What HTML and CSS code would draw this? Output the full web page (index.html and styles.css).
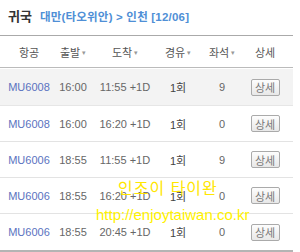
FILE: index.html
```html
<!DOCTYPE html>
<html lang="ko">
<head>
<meta charset="utf-8">
<link rel="stylesheet" href="styles.css">
</head>
<body>
<div class="page">
  <div class="title">
    <span class="title-main">귀국</span>
    <span class="title-route">대만(타오위안) &gt; 인천 [12/06]</span>
  </div>
  <div class="table">
    <div class="row head">
      <div class="c c1">항공</div>
      <div class="c c2">출발<span class="arr">▾</span></div>
      <div class="c c3">도착<span class="arr">▾</span></div>
      <div class="c c4">경유<span class="arr">▾</span></div>
      <div class="c c5">좌석<span class="arr">▾</span></div>
      <div class="c c6">상세</div>
    </div>
    <div class="gap"></div>
    <div class="row data sel">
      <div class="c c1 code">MU6008</div>
      <div class="c c2">16:00</div>
      <div class="c c3">11:55 +1D</div>
      <div class="c c4 stop">1회</div>
      <div class="c c5">9</div>
      <div class="c c6"><span class="btn">상세</span></div>
    </div>
    <div class="row data">
      <div class="c c1 code">MU6008</div>
      <div class="c c2">16:00</div>
      <div class="c c3">16:20 +1D</div>
      <div class="c c4 stop">1회</div>
      <div class="c c5">0</div>
      <div class="c c6"><span class="btn">상세</span></div>
    </div>
    <div class="row data">
      <div class="c c1 code">MU6006</div>
      <div class="c c2">18:55</div>
      <div class="c c3">11:55 +1D</div>
      <div class="c c4 stop">1회</div>
      <div class="c c5">9</div>
      <div class="c c6"><span class="btn">상세</span></div>
    </div>
    <div class="row data">
      <div class="c c1 code">MU6006</div>
      <div class="c c2">18:55</div>
      <div class="c c3">16:20 +1D</div>
      <div class="c c4 stop">1회</div>
      <div class="c c5">0</div>
      <div class="c c6"><span class="btn">상세</span></div>
    </div>
    <div class="row data last">
      <div class="c c1 code">MU6006</div>
      <div class="c c2">18:55</div>
      <div class="c c3">20:45 +1D</div>
      <div class="c c4 stop">1회</div>
      <div class="c c5">0</div>
      <div class="c c6"><span class="btn">상세</span></div>
    </div>
  </div>
  <div class="wm-kr">인조이 타이완</div>
  <div class="wm-url">http://enjoytaiwan.co.kr</div>
</div>
</body>
</html>
```

FILE: styles.css
```css
html, body {
  margin: 0;
  padding: 0;
  background: #fff;
}
.page {
  position: relative;
  width: 300px;
  height: 252px;
  overflow: hidden;
  font-family: "Liberation Sans", "Noto Sans CJK KR", sans-serif;
}
.title {
  height: 35px;
  padding-left: 8px;
  display: flex;
  align-items: center;
  gap: 8px;
  box-sizing: border-box;
  padding-bottom: 4px;
}
.title-main {
  font-family: "Noto Sans CJK KR", sans-serif;
  font-weight: bold;
  font-size: 13px;
  color: #333;
}
.title-route {
  font-family: "Liberation Sans", "Noto Sans CJK KR", sans-serif;
  font-weight: bold;
  font-size: 11.5px;
  letter-spacing: 0.2px;
  color: #4f8fd6;
}
.table {
  width: 293px;
  border-top: 1px solid #aaa;
  border-bottom: 2px solid #b4b4b4;
}
.row {
  display: grid;
  grid-template-columns: 58px 30px 74px 32px 56px 30px 1fr;
  align-items: center;
}
.head {
  height: 31px;
  border-bottom: 1px solid #bbb;
  font-family: "Noto Sans CJK KR", sans-serif;
  font-size: 11px;
  color: #555;
}
.gap {
  height: 1px;
}
.data {
  height: 35px;
  border-bottom: 1px solid #e3e3e3;
  font-size: 11px;
  color: #666;
}
.data.last {
  border-bottom: none;
  height: 36px;
}
.sel {
  background: #f3f3f3;
  height: 36px;
  border-bottom-color: #e6e6e6;
}
.c {
  text-align: center;
  white-space: nowrap;
  display: flex;
  justify-content: center;
  align-items: center;
}
.arr {
  font-size: 7px;
  color: #999;
  margin-left: 2px;
}
.code {
  color: #5a72c0;
}
.stop {
  font-family: "Liberation Sans", "Noto Sans CJK KR", sans-serif;
  color: #444;
}
.btn {
  display: inline-flex;
  align-items: center;
  justify-content: center;
  width: 27px;
  height: 15px;
  border: 1px solid #aaa;
  border-radius: 2px;
  background: linear-gradient(#fdfdfd, #e8e8e8);
  font-family: "Noto Sans CJK KR", sans-serif;
  font-size: 11px;
  color: #777;
}
.wm-kr {
  position: absolute;
  left: 118px;
  top: 177px;
  font-family: "Noto Sans CJK KR", sans-serif;
  font-size: 16px;
  line-height: 20px;
  color: #ffe600;
  letter-spacing: 1px;
}
.wm-url {
  position: absolute;
  left: 96px;
  top: 206px;
  font-family: "Liberation Sans", sans-serif;
  font-size: 15px;
  line-height: 18px;
  color: #fff200;
}
```
